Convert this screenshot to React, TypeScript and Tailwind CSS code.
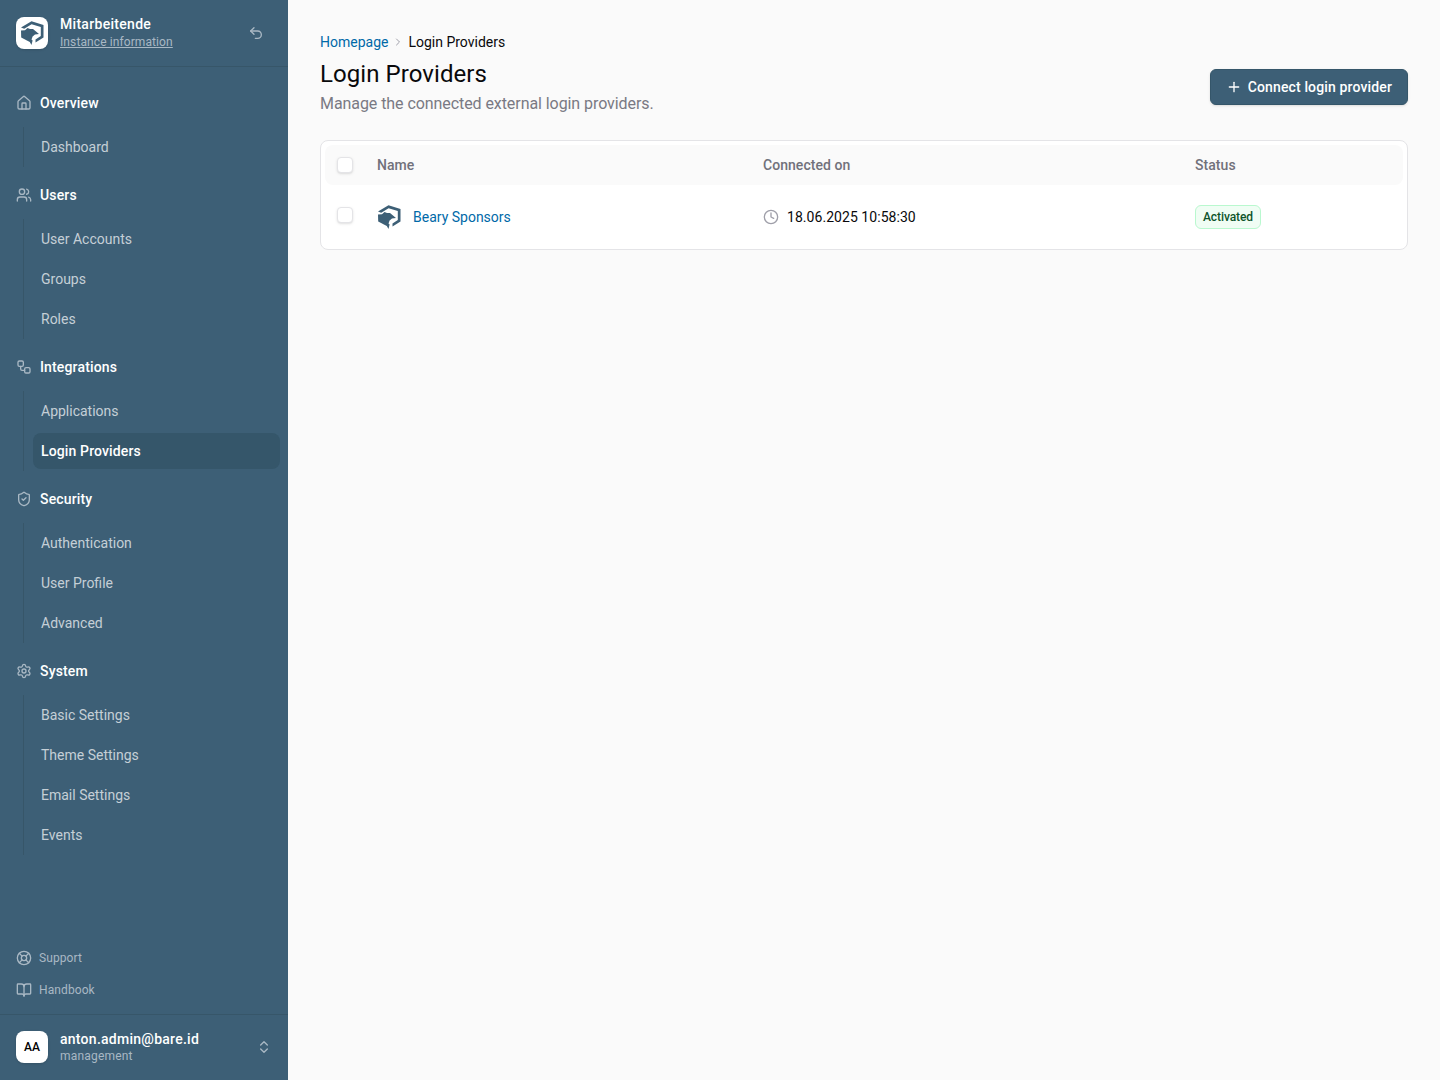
import {
  BookOpen,
  ChevronRight,
  ChevronsUpDown,
  Clock,
  House,
  LifeBuoy,
  Plus,
  Settings,
  ShieldCheck,
  Undo2,
  Users,
  Workflow,
} from "lucide-react";

const navGroups = [
  { title: "Overview", icon: House, items: ["Dashboard"] },
  { title: "Users", icon: Users, items: ["User Accounts", "Groups", "Roles"] },
  { title: "Integrations", icon: Workflow, items: ["Applications", "Login Providers"] },
  { title: "Security", icon: ShieldCheck, items: ["Authentication", "User Profile", "Advanced"] },
  { title: "System", icon: Settings, items: ["Basic Settings", "Theme Settings", "Email Settings", "Events"] },
];

const Logo = ({ className }: { className: string }) => (
  <svg viewBox="0 0 24 24" className={className} fill="#3d5f76">
    {/* shield outline, open at the lower left */}
    <path d="M1 6.4 11.5.3 23.5 4V16.5L15.5 21.5V18.6L20.8 15V6L11.6 3.2 4.2 7.8Z" />
    {/* bear */}
    <path d="M1 9.6 5 9.2 7.5 7 10 8 13 8 19 13 15 13.6 12.6 15.5 11.5 18.5 12.6 19.5 11.5 24 9.8 21 1.2 16.5Z" />
  </svg>
);

const Sidebar = () => {
  return (
    <aside className="flex h-[1080px] w-[288px] shrink-0 flex-col bg-[#3d5f76]">
      <div className="flex h-[67px] shrink-0 items-center border-b border-[#375669] pl-4 pr-6">
        <div className="flex size-8 items-center justify-center rounded-lg bg-white shadow-sm">
          <Logo className="size-6" />
        </div>
        <div className="ml-3 flex-1 pb-0.5">
          <div className="text-sm leading-5 font-medium tracking-[0.3px] text-white">Mitarbeitende</div>
          <div className="text-xs leading-4 tracking-[0.1px] text-[#a9b8c4] underline">Instance information</div>
        </div>
        <Undo2 className="size-4 text-[#a9b8c4]" />
      </div>

      <nav className="flex flex-col gap-2.5 pt-[18px] pr-2">
        {navGroups.map((group) => (
          <div key={group.title}>
            <div className="flex h-9 items-center pl-4">
              <group.icon className="size-4 text-[#a9b8c4]" />
              <span className="ml-2 text-sm font-medium tracking-[0.15px] text-white">{group.title}</span>
            </div>
            <ul className="mt-1.5 ml-[23px] flex flex-col gap-1 border-l border-[#375669] py-0.5 pl-[9px]">
              {group.items.map((item) => (
                <li
                  key={item}
                  className={
                    item === "Login Providers"
                      ? "flex h-9 items-center rounded-lg bg-[#35566a] px-2 text-sm font-medium tracking-[0.13px] text-white"
                      : "flex h-9 items-center px-2 text-sm text-[#c5cfd6]"
                  }
                >
                  {item}
                </li>
              ))}
            </ul>
          </div>
        ))}
      </nav>

      <div className="mt-auto flex flex-col gap-2 px-4 pb-3">
        <div className="flex h-6 items-center gap-[7px] text-xs tracking-[0.1px] text-[#a9b8c4]">
          <LifeBuoy className="size-4" />
          Support
        </div>
        <div className="flex h-6 items-center gap-[7px] text-xs tracking-[0.1px] text-[#a9b8c4]">
          <BookOpen className="size-4" />
          Handbook
        </div>
      </div>

      <div className="flex h-[66px] shrink-0 items-center border-t border-[#375669] pr-4 pb-0.5 pl-4">
        <div className="flex size-8 items-center justify-center rounded-lg bg-white text-xs font-medium text-black shadow-sm">
          AA
        </div>
        <div className="ml-3 flex-1">
          <div className="text-sm leading-[18px] font-medium tracking-[0.26px] text-white">anton.admin@bare.id</div>
          <div className="text-xs leading-4 tracking-[0.2px] text-[#a9b8c4]">management</div>
        </div>
        <ChevronsUpDown className="size-4 text-[#a9b8c4]" />
      </div>
    </aside>
  );
};

export default function App() {
  return (
    <div className="flex min-h-[1080px] bg-[#fafafa] font-['Roboto',sans-serif] text-[#09090b]">
      <Sidebar />
      <main className="flex-1 px-8 pt-8">
        <div className="flex items-center text-sm leading-5">
          <span className="text-[#0069a8]">Homepage</span>
          <ChevronRight className="mx-1 size-3 text-[#9f9fa9]" />
          <span>Login Providers</span>
        </div>

        <div className="mt-1.5 flex items-end justify-between">
          <div>
            <h1 className="text-2xl leading-8 tracking-[0.07px]">Login Providers</h1>
            <p className="mt-0.5 text-base leading-6 tracking-[-0.07px] text-[#797983]">
              Manage the connected external login providers.
            </p>
          </div>
          <button className="mb-[11px] flex h-9 items-center gap-1.5 rounded-md border border-[#35566a] bg-[#3d5f76] pr-[15px] pl-[15px] text-sm font-medium tracking-[0.14px] text-white shadow-sm">
            <Plus className="size-4" />
            Connect login provider
          </button>
        </div>

        <div className="mt-6 rounded-lg border border-[#e4e4e7] bg-white p-1">
          <div className="grid h-10 grid-cols-[52px_386px_432px_1fr] items-center rounded-lg bg-[#fafafa] text-sm font-medium tracking-[0.05px] text-[#71717b]">
            <span className="ml-3 size-4 rounded border border-[#e4e4e7] bg-white shadow-sm" />
            <span>Name</span>
            <span>Connected on</span>
            <span>Status</span>
          </div>
          <div className="grid h-[60px] grid-cols-[52px_386px_432px_1fr] items-center text-sm">
            <span className="ml-3 size-4 rounded border border-[#e4e4e7] bg-white shadow-sm" />
            <div className="mt-1 flex items-center gap-3">
              <Logo className="size-6" />
              <span className="text-[#0069a8]">Beary Sponsors</span>
            </div>
            <div className="mt-1 flex items-center gap-2 tracking-[0.05px]">
              <Clock className="size-4 text-[#9f9fa9]" />
              18.06.2025 10:58:30
            </div>
            <div className="mt-1">
              <span className="inline-flex h-6 items-center rounded-md border border-[#b9f8cf] bg-[#f0fdf4] px-[7px] text-xs font-medium tracking-[-0.1px] text-[#0d542b]">
                Activated
              </span>
            </div>
          </div>
        </div>
      </main>
    </div>
  );
}
